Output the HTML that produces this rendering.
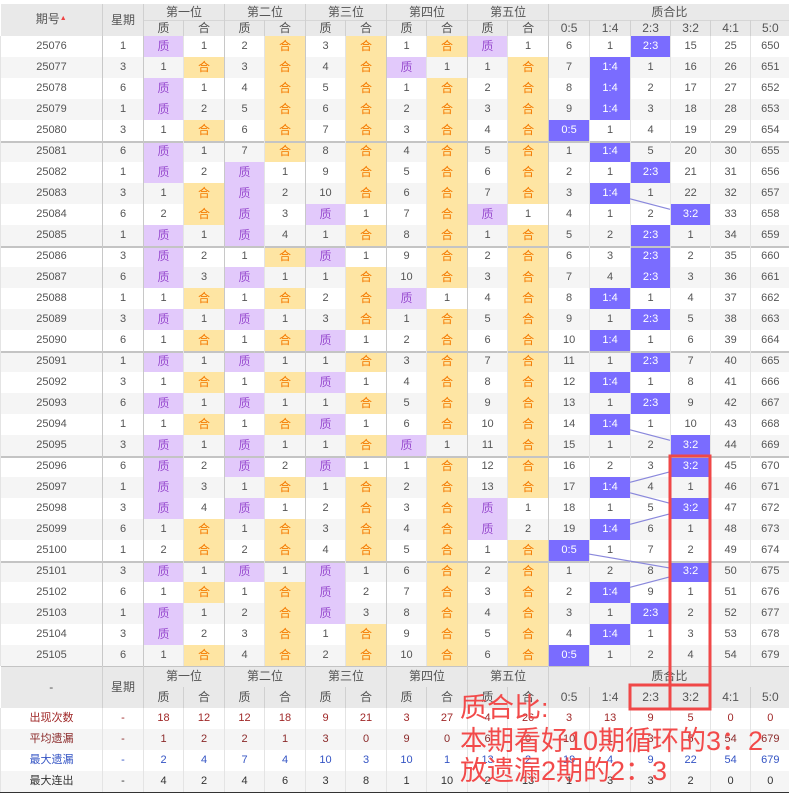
<!DOCTYPE html>
<html><head><meta charset="utf-8">
<style>
body{margin:0;background:#fff;width:789px;height:795px;overflow:hidden;position:relative;font-family:"Liberation Sans","Noto Sans CJK SC",sans-serif;}
table{position:absolute;left:0;top:4px;border-collapse:collapse;table-layout:fixed;width:789px;}
td{padding:0;text-align:center;font-size:11px;color:#555;border-left:1px solid #e4e4e4;height:21px;line-height:21px;white-space:nowrap;overflow:hidden;}
thead td{background:#e9e9e9;height:16px;line-height:16px;font-size:12px;color:#555;border-left:1px solid #d0d0d0;}
thead tr.s td{box-shadow:inset 0 1px 0 #d6d6d6;}
tbody.d td:nth-child(2),tbody.d td:nth-child(3),tbody.d td:nth-child(5),tbody.d td:nth-child(7),tbody.d td:nth-child(9),tbody.d td:nth-child(11),tbody.d td:nth-child(13){border-left-color:#c8c8c8;}
tbody.d tr:nth-child(even){background:#f5f5f5;}
tr.g td{box-shadow:inset 0 2px 0 #c4c4c4;}
td.z{background:#e2c9fb;color:#9a4fd0;font-size:12px;}
td.h{background:#fee5a3;color:#f47a00;font-size:12px;}
td.r{background:#7a6cff;color:#fff;}
tbody.f td.hd{background:#e9e9e9;font-size:12px;border-left-color:#d0d0d0;}
tbody.f tr.t td{box-shadow:inset 0 1px 0 #c4c4c4;}
tr.a td{color:#a02828;}
tr.b td{color:#8b2a2a;}
tr.c td{color:#3454c4;}
tr.e td{color:#333;border-bottom:1px solid #333;}
.ov{position:absolute;left:460px;color:#f24a4a;font-size:27px;font-family:"Liberation Sans","Noto Sans CJK SC",sans-serif;line-height:30px;white-space:nowrap;}
</style></head><body>
<table>
<colgroup><col style="width:102px"><col style="width:41px"><col style="width:40px"><col style="width:41px"><col style="width:40px"><col style="width:41px"><col style="width:40px"><col style="width:41px"><col style="width:40px"><col style="width:41px"><col style="width:40px"><col style="width:41px"><col style="width:41px"><col style="width:41px"><col style="width:40px"><col style="width:40px"><col style="width:40px"><col style="width:39px"></colgroup>
<thead>
<tr><td rowspan="2" style="border-left:0">期号<span style="font-size:7px;color:#e44;position:relative;top:-3px">▲</span></td><td rowspan="2">星期</td><td colspan="2">第一位</td><td colspan="2">第二位</td><td colspan="2">第三位</td><td colspan="2">第四位</td><td colspan="2">第五位</td><td colspan="6">质合比</td></tr>
<tr class="s"><td>质</td><td>合</td><td>质</td><td>合</td><td>质</td><td>合</td><td>质</td><td>合</td><td>质</td><td>合</td><td>0:5</td><td>1:4</td><td>2:3</td><td>3:2</td><td>4:1</td><td>5:0</td></tr>
</thead>
<tbody class="d">
<tr><td>25076</td><td>1</td><td class="z">质</td><td>1</td><td>2</td><td class="h">合</td><td>3</td><td class="h">合</td><td>1</td><td class="h">合</td><td class="z">质</td><td>1</td><td>6</td><td>1</td><td class="r">2:3</td><td>15</td><td>25</td><td>650</td></tr>
<tr><td>25077</td><td>3</td><td>1</td><td class="h">合</td><td>3</td><td class="h">合</td><td>4</td><td class="h">合</td><td class="z">质</td><td>1</td><td>1</td><td class="h">合</td><td>7</td><td class="r">1:4</td><td>1</td><td>16</td><td>26</td><td>651</td></tr>
<tr><td>25078</td><td>6</td><td class="z">质</td><td>1</td><td>4</td><td class="h">合</td><td>5</td><td class="h">合</td><td>1</td><td class="h">合</td><td>2</td><td class="h">合</td><td>8</td><td class="r">1:4</td><td>2</td><td>17</td><td>27</td><td>652</td></tr>
<tr><td>25079</td><td>1</td><td class="z">质</td><td>2</td><td>5</td><td class="h">合</td><td>6</td><td class="h">合</td><td>2</td><td class="h">合</td><td>3</td><td class="h">合</td><td>9</td><td class="r">1:4</td><td>3</td><td>18</td><td>28</td><td>653</td></tr>
<tr><td>25080</td><td>3</td><td>1</td><td class="h">合</td><td>6</td><td class="h">合</td><td>7</td><td class="h">合</td><td>3</td><td class="h">合</td><td>4</td><td class="h">合</td><td class="r">0:5</td><td>1</td><td>4</td><td>19</td><td>29</td><td>654</td></tr>
<tr class="g"><td>25081</td><td>6</td><td class="z">质</td><td>1</td><td>7</td><td class="h">合</td><td>8</td><td class="h">合</td><td>4</td><td class="h">合</td><td>5</td><td class="h">合</td><td>1</td><td class="r">1:4</td><td>5</td><td>20</td><td>30</td><td>655</td></tr>
<tr><td>25082</td><td>1</td><td class="z">质</td><td>2</td><td class="z">质</td><td>1</td><td>9</td><td class="h">合</td><td>5</td><td class="h">合</td><td>6</td><td class="h">合</td><td>2</td><td>1</td><td class="r">2:3</td><td>21</td><td>31</td><td>656</td></tr>
<tr><td>25083</td><td>3</td><td>1</td><td class="h">合</td><td class="z">质</td><td>2</td><td>10</td><td class="h">合</td><td>6</td><td class="h">合</td><td>7</td><td class="h">合</td><td>3</td><td class="r">1:4</td><td>1</td><td>22</td><td>32</td><td>657</td></tr>
<tr><td>25084</td><td>6</td><td>2</td><td class="h">合</td><td class="z">质</td><td>3</td><td class="z">质</td><td>1</td><td>7</td><td class="h">合</td><td class="z">质</td><td>1</td><td>4</td><td>1</td><td>2</td><td class="r">3:2</td><td>33</td><td>658</td></tr>
<tr><td>25085</td><td>1</td><td class="z">质</td><td>1</td><td class="z">质</td><td>4</td><td>1</td><td class="h">合</td><td>8</td><td class="h">合</td><td>1</td><td class="h">合</td><td>5</td><td>2</td><td class="r">2:3</td><td>1</td><td>34</td><td>659</td></tr>
<tr class="g"><td>25086</td><td>3</td><td class="z">质</td><td>2</td><td>1</td><td class="h">合</td><td class="z">质</td><td>1</td><td>9</td><td class="h">合</td><td>2</td><td class="h">合</td><td>6</td><td>3</td><td class="r">2:3</td><td>2</td><td>35</td><td>660</td></tr>
<tr><td>25087</td><td>6</td><td class="z">质</td><td>3</td><td class="z">质</td><td>1</td><td>1</td><td class="h">合</td><td>10</td><td class="h">合</td><td>3</td><td class="h">合</td><td>7</td><td>4</td><td class="r">2:3</td><td>3</td><td>36</td><td>661</td></tr>
<tr><td>25088</td><td>1</td><td>1</td><td class="h">合</td><td>1</td><td class="h">合</td><td>2</td><td class="h">合</td><td class="z">质</td><td>1</td><td>4</td><td class="h">合</td><td>8</td><td class="r">1:4</td><td>1</td><td>4</td><td>37</td><td>662</td></tr>
<tr><td>25089</td><td>3</td><td class="z">质</td><td>1</td><td class="z">质</td><td>1</td><td>3</td><td class="h">合</td><td>1</td><td class="h">合</td><td>5</td><td class="h">合</td><td>9</td><td>1</td><td class="r">2:3</td><td>5</td><td>38</td><td>663</td></tr>
<tr><td>25090</td><td>6</td><td>1</td><td class="h">合</td><td>1</td><td class="h">合</td><td class="z">质</td><td>1</td><td>2</td><td class="h">合</td><td>6</td><td class="h">合</td><td>10</td><td class="r">1:4</td><td>1</td><td>6</td><td>39</td><td>664</td></tr>
<tr class="g"><td>25091</td><td>1</td><td class="z">质</td><td>1</td><td class="z">质</td><td>1</td><td>1</td><td class="h">合</td><td>3</td><td class="h">合</td><td>7</td><td class="h">合</td><td>11</td><td>1</td><td class="r">2:3</td><td>7</td><td>40</td><td>665</td></tr>
<tr><td>25092</td><td>3</td><td>1</td><td class="h">合</td><td>1</td><td class="h">合</td><td class="z">质</td><td>1</td><td>4</td><td class="h">合</td><td>8</td><td class="h">合</td><td>12</td><td class="r">1:4</td><td>1</td><td>8</td><td>41</td><td>666</td></tr>
<tr><td>25093</td><td>6</td><td class="z">质</td><td>1</td><td class="z">质</td><td>1</td><td>1</td><td class="h">合</td><td>5</td><td class="h">合</td><td>9</td><td class="h">合</td><td>13</td><td>1</td><td class="r">2:3</td><td>9</td><td>42</td><td>667</td></tr>
<tr><td>25094</td><td>1</td><td>1</td><td class="h">合</td><td>1</td><td class="h">合</td><td class="z">质</td><td>1</td><td>6</td><td class="h">合</td><td>10</td><td class="h">合</td><td>14</td><td class="r">1:4</td><td>1</td><td>10</td><td>43</td><td>668</td></tr>
<tr><td>25095</td><td>3</td><td class="z">质</td><td>1</td><td class="z">质</td><td>1</td><td>1</td><td class="h">合</td><td class="z">质</td><td>1</td><td>11</td><td class="h">合</td><td>15</td><td>1</td><td>2</td><td class="r">3:2</td><td>44</td><td>669</td></tr>
<tr class="g"><td>25096</td><td>6</td><td class="z">质</td><td>2</td><td class="z">质</td><td>2</td><td class="z">质</td><td>1</td><td>1</td><td class="h">合</td><td>12</td><td class="h">合</td><td>16</td><td>2</td><td>3</td><td class="r">3:2</td><td>45</td><td>670</td></tr>
<tr><td>25097</td><td>1</td><td class="z">质</td><td>3</td><td>1</td><td class="h">合</td><td>1</td><td class="h">合</td><td>2</td><td class="h">合</td><td>13</td><td class="h">合</td><td>17</td><td class="r">1:4</td><td>4</td><td>1</td><td>46</td><td>671</td></tr>
<tr><td>25098</td><td>3</td><td class="z">质</td><td>4</td><td class="z">质</td><td>1</td><td>2</td><td class="h">合</td><td>3</td><td class="h">合</td><td class="z">质</td><td>1</td><td>18</td><td>1</td><td>5</td><td class="r">3:2</td><td>47</td><td>672</td></tr>
<tr><td>25099</td><td>6</td><td>1</td><td class="h">合</td><td>1</td><td class="h">合</td><td>3</td><td class="h">合</td><td>4</td><td class="h">合</td><td class="z">质</td><td>2</td><td>19</td><td class="r">1:4</td><td>6</td><td>1</td><td>48</td><td>673</td></tr>
<tr><td>25100</td><td>1</td><td>2</td><td class="h">合</td><td>2</td><td class="h">合</td><td>4</td><td class="h">合</td><td>5</td><td class="h">合</td><td>1</td><td class="h">合</td><td class="r">0:5</td><td>1</td><td>7</td><td>2</td><td>49</td><td>674</td></tr>
<tr class="g"><td>25101</td><td>3</td><td class="z">质</td><td>1</td><td class="z">质</td><td>1</td><td class="z">质</td><td>1</td><td>6</td><td class="h">合</td><td>2</td><td class="h">合</td><td>1</td><td>2</td><td>8</td><td class="r">3:2</td><td>50</td><td>675</td></tr>
<tr><td>25102</td><td>6</td><td>1</td><td class="h">合</td><td>1</td><td class="h">合</td><td class="z">质</td><td>2</td><td>7</td><td class="h">合</td><td>3</td><td class="h">合</td><td>2</td><td class="r">1:4</td><td>9</td><td>1</td><td>51</td><td>676</td></tr>
<tr><td>25103</td><td>1</td><td class="z">质</td><td>1</td><td>2</td><td class="h">合</td><td class="z">质</td><td>3</td><td>8</td><td class="h">合</td><td>4</td><td class="h">合</td><td>3</td><td>1</td><td class="r">2:3</td><td>2</td><td>52</td><td>677</td></tr>
<tr><td>25104</td><td>3</td><td class="z">质</td><td>2</td><td>3</td><td class="h">合</td><td>1</td><td class="h">合</td><td>9</td><td class="h">合</td><td>5</td><td class="h">合</td><td>4</td><td class="r">1:4</td><td>1</td><td>3</td><td>53</td><td>678</td></tr>
<tr><td>25105</td><td>6</td><td>1</td><td class="h">合</td><td>4</td><td class="h">合</td><td>2</td><td class="h">合</td><td>10</td><td class="h">合</td><td>6</td><td class="h">合</td><td class="r">0:5</td><td>1</td><td>2</td><td>4</td><td>54</td><td>679</td></tr>
</tbody>
<tbody class="f">
<tr class="t"><td class="hd" rowspan="2" style="border-left:0">-</td><td class="hd" rowspan="2">星期</td><td class="hd" colspan="2">第一位</td><td class="hd" colspan="2">第二位</td><td class="hd" colspan="2">第三位</td><td class="hd" colspan="2">第四位</td><td class="hd" colspan="2">第五位</td><td class="hd" colspan="6">质合比</td></tr>
<tr><td class="hd">质</td><td class="hd">合</td><td class="hd">质</td><td class="hd">合</td><td class="hd">质</td><td class="hd">合</td><td class="hd">质</td><td class="hd">合</td><td class="hd">质</td><td class="hd">合</td><td class="hd">0:5</td><td class="hd">1:4</td><td class="hd">2:3</td><td class="hd">3:2</td><td class="hd">4:1</td><td class="hd">5:0</td></tr>
<tr class="a"><td>出现次数</td><td>-</td><td>18</td><td>12</td><td>12</td><td>18</td><td>9</td><td>21</td><td>3</td><td>27</td><td>4</td><td>26</td><td>3</td><td>13</td><td>9</td><td>5</td><td>0</td><td>0</td></tr>
<tr class="b" style="background:#f5f5f5"><td>平均遗漏</td><td>-</td><td>1</td><td>2</td><td>2</td><td>1</td><td>3</td><td>0</td><td>9</td><td>0</td><td>6</td><td>0</td><td>10</td><td>1</td><td>3</td><td>5</td><td>54</td><td>679</td></tr>
<tr class="c"><td>最大遗漏</td><td>-</td><td>2</td><td>4</td><td>7</td><td>4</td><td>10</td><td>3</td><td>10</td><td>1</td><td>13</td><td>2</td><td>19</td><td>4</td><td>9</td><td>22</td><td>54</td><td>679</td></tr>
<tr class="e" style="background:#f5f5f5"><td>最大连出</td><td>-</td><td>4</td><td>2</td><td>4</td><td>6</td><td>3</td><td>8</td><td>1</td><td>10</td><td>2</td><td>13</td><td>1</td><td>3</td><td>3</td><td>2</td><td>0</td><td>0</td></tr>
</tbody>
</table>
<svg width="789" height="795" style="position:absolute;left:0;top:0" xmlns="http://www.w3.org/2000/svg">
<g stroke="#8a88dc" stroke-width="1.2" fill="none">
<line x1="630" y1="198.85" x2="670" y2="209.28"/>
<line x1="630" y1="429.85" x2="670" y2="440.28"/>
<line x1="670" y1="471.85" x2="630" y2="482.28"/>
<line x1="630" y1="492.85" x2="670" y2="503.28"/>
<line x1="670" y1="513.85" x2="630" y2="524.28"/>
<line x1="589" y1="554.04" x2="670" y2="568.04"/>
<line x1="670" y1="576.85" x2="630" y2="587.28"/>
</g>
<g stroke="#f04848" stroke-width="3" fill="none">
<polyline points="670,708 670,456 710,456 710,708"/>
<rect x="630" y="685" width="80" height="24"/>
</g>
</svg>
<div class="ov" style="top:693px">质合比:</div>
<div class="ov" style="top:726px">本期看好10期循环的3：2</div>
<div class="ov" style="top:756px">放遗漏2期的2：3</div>
</body></html>
